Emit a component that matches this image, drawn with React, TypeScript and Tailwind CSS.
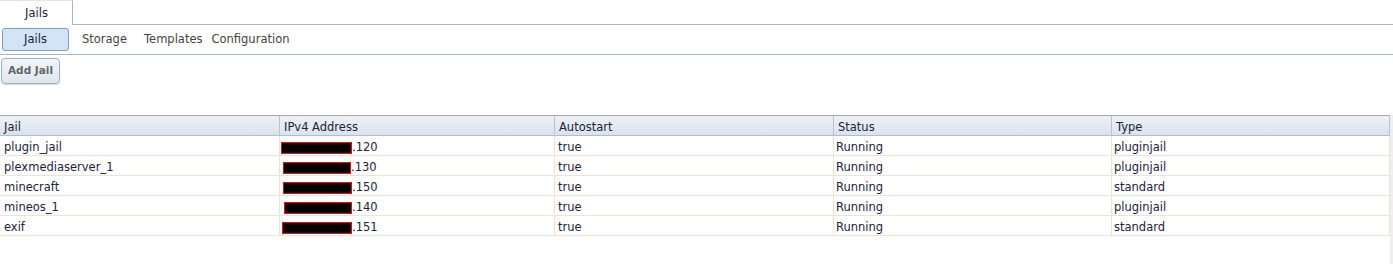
import React from "react";

interface JailRow {
  name: string;
  ipOffset: number;
  ipWidth: number;
  suffix: string;
  autostart: string;
  status: string;
  type: string;
}

const rows: JailRow[] = [
  { name: "plugin_jail", ipOffset: 1, ipWidth: 71, suffix: ".120", autostart: "true", status: "Running", type: "pluginjail" },
  { name: "plexmediaserver_1", ipOffset: 3, ipWidth: 68, suffix: ".130", autostart: "true", status: "Running", type: "pluginjail" },
  { name: "minecraft", ipOffset: 3, ipWidth: 69, suffix: ".150", autostart: "true", status: "Running", type: "standard" },
  { name: "mineos_1", ipOffset: 4, ipWidth: 68, suffix: ".140", autostart: "true", status: "Running", type: "pluginjail" },
  { name: "exif", ipOffset: 2, ipWidth: 70, suffix: ".151", autostart: "true", status: "Running", type: "standard" },
];

const columns = ["Jail", "IPv4 Address", "Autostart", "Status", "Type"];
const gridCols = "grid grid-cols-[279px_275px_279px_278px_1fr]";

const App: React.FC = () => {
  return (
    <div className="w-[1393px] h-[264px] bg-white overflow-hidden text-[11.5px] font-['DejaVu_Sans',Verdana,sans-serif] text-[#22223a]">
      {/* Top tab strip */}
      <div className="flex h-[25px]">
        <div className="w-[73px] h-[25px] border-t border-[#dfe8f1] border-r border-r-[#aab3bf] bg-white flex items-center justify-center pl-[1px] pt-[2px]">
          Jails
        </div>
        <div className="flex-1 border-b border-[#aab3bf]" />
      </div>

      {/* Sub tabs */}
      <div className="flex items-center h-[30px] border-b border-[#aab3bf] pl-[2px] text-[#444]">
        <button className="w-[67px] h-[23px] rounded-[3px] border border-[#7e9ec2] bg-[#d3e4f7] text-[#22223a] flex items-center justify-center">
          Jails
        </button>
        <span className="ml-[13px]">Storage</span>
        <span className="ml-[17px]">Templates</span>
        <span className="ml-[9px]">Configuration</span>
      </div>

      {/* Toolbar */}
      <div className="h-[60px] pt-[3px] pl-[1px]">
        <button className="w-[59px] h-[26px] rounded-[4px] border border-[#9bb1c8] bg-gradient-to-b from-[#f3f6fa] to-[#dde6ef] shadow-[0_1px_1px_rgba(0,0,0,0.15)] text-[#666] font-bold text-[10.5px] flex items-center justify-center">
          Add Jail
        </button>
      </div>

      {/* Grid */}
      <div className="flex">
        <div className="w-[1390px]">
          <div className={`${gridCols} h-[21px] border-t border-[#a3a6aa] border-b border-b-[#b7bcc3] bg-gradient-to-b from-[#eef2f7] to-[#d9e3ed]`}>
            {columns.map((c, i) => (
              <div
                key={c}
                className={`flex items-center pl-[4px] pt-[3px] ${i > 0 ? "border-l border-[#bcc2c9]" : ""} ${i === 4 ? "border-r border-[#bcc2c9]" : ""}`}
              >
                {c}
              </div>
            ))}
          </div>
          {rows.map((r) => (
            <div key={r.name} className={`${gridCols} h-[20px] border-b border-[#efe1d3]`}>
              <div className="flex items-center pl-[4px] pt-[3px]">{r.name}</div>
              <div className="flex items-center pt-[3px] border-l border-[#efe1d3]">
                <span
                  className="inline-block h-[12px] bg-black border border-[#ff0000]"
                  style={{ marginLeft: r.ipOffset, width: r.ipWidth }}
                />
                <span>{r.suffix}</span>
              </div>
              <div className="flex items-center pl-[3px] pt-[3px] border-l border-[#efe1d3]">{r.autostart}</div>
              <div className="flex items-center pl-[2px] pt-[3px] border-l border-[#efe1d3]">{r.status}</div>
              <div className="flex items-center pl-[2px] pt-[3px] border-l border-r border-[#efe1d3]">{r.type}</div>
            </div>
          ))}
        </div>
        <div className="flex-1 bg-[#efefef] h-[150px]" />
      </div>
    </div>
  );
};

export default App;
